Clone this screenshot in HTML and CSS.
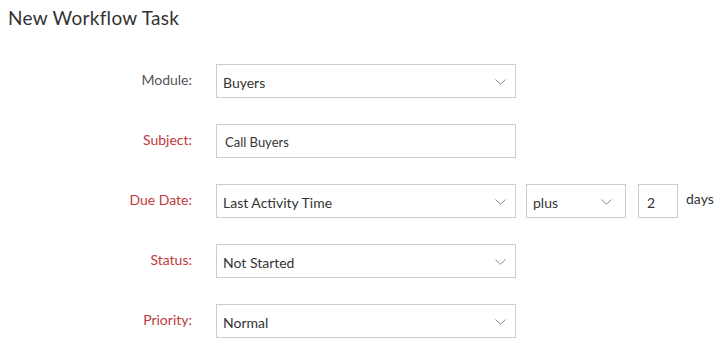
FILE: index.html
```html
<!DOCTYPE html>
<html lang="en">
<head>
  <meta charset="UTF-8" />
  <title>New Workflow Task</title>
  <link rel="stylesheet" href="styles.css">
</head>
<body>
  <h1 class="page-title">New Workflow Task</h1>

  <div class="task-form">
    <div class="form-row">
      <label class="field-label">Module:</label>
      <div class="select-box wide">
        <span>Buyers</span>
        <svg class="chevron" width="11" height="6" viewBox="0 0 11 6"><path d="M0.5 0.5 L5.5 5.2 L10.5 0.5" fill="none" stroke="#8a8a8a" stroke-width="1"/></svg>
      </div>
    </div>

    <div class="form-row">
      <label class="field-label required">Subject:</label>
      <div class="text-box wide small">Call Buyers</div>
    </div>

    <div class="form-row">
      <label class="field-label required">Due Date:</label>
      <div class="select-box wide">
        <span>Last Activity Time</span>
        <svg class="chevron" width="11" height="6" viewBox="0 0 11 6"><path d="M0.5 0.5 L5.5 5.2 L10.5 0.5" fill="none" stroke="#8a8a8a" stroke-width="1"/></svg>
      </div>
      <div class="select-box narrow">
        <span>plus</span>
        <svg class="chevron" width="11" height="6" viewBox="0 0 11 6"><path d="M0.5 0.5 L5.5 5.2 L10.5 0.5" fill="none" stroke="#8a8a8a" stroke-width="1"/></svg>
      </div>
      <div class="text-box days-input">2</div>
      <span class="unit">days</span>
    </div>

    <div class="form-row">
      <label class="field-label required">Status:</label>
      <div class="select-box wide">
        <span>Not Started</span>
        <svg class="chevron" width="11" height="6" viewBox="0 0 11 6"><path d="M0.5 0.5 L5.5 5.2 L10.5 0.5" fill="none" stroke="#8a8a8a" stroke-width="1"/></svg>
      </div>
    </div>

    <div class="form-row">
      <label class="field-label required">Priority:</label>
      <div class="select-box wide">
        <span>Normal</span>
        <svg class="chevron" width="11" height="6" viewBox="0 0 11 6"><path d="M0.5 0.5 L5.5 5.2 L10.5 0.5" fill="none" stroke="#8a8a8a" stroke-width="1"/></svg>
      </div>
    </div>
  </div>
</body>
</html>
```

FILE: styles.css
```css
body {
  margin: 0;
  font-family: Lato, "Open Sans", sans-serif;
  color: #333;
  background: #fff;
}

.page-title {
  margin: 0;
  padding: 6px 8px 0;
  font-size: 19px;
  font-weight: 400;
  letter-spacing: 0.3px;
  color: #333;
  line-height: 24px;
}

.task-form {
  display: flex;
  flex-direction: column;
  gap: 26px;
  padding-top: 34px;
}

.form-row {
  display: flex;
  align-items: flex-start;
}

.field-label {
  width: 216px;
  text-align: right;
  padding-right: 24px;
  padding-top: 7px;
  font-size: 14px;
  line-height: 17px;
  color: #555;
  box-sizing: border-box;
}

.field-label.required {
  color: #c1393d;
}

.select-box, .text-box {
  height: 34px;
  border: 1px solid #ccc;
  box-sizing: border-box;
  display: flex;
  align-items: center;
  font-size: 14px;
  color: #333;
  background: #fff;
}

.select-box {
  justify-content: space-between;
  padding: 2px 9px 0 6px;
}

.select-box.wide, .text-box.wide {
  width: 300px;
}

.select-box.narrow {
  width: 100px;
  margin-left: 10px;
  padding-right: 13px;
}

.text-box {
  padding: 2px 8px 0;
}

.text-box.small {
  font-size: 13px;
}

.days-input {
  width: 40px;
  margin-left: 12px;
}

.unit {
  margin-left: 8px;
  padding-top: 6px;
  font-size: 14px;
  color: #333;
}

.chevron {
  flex: none;
}
```
